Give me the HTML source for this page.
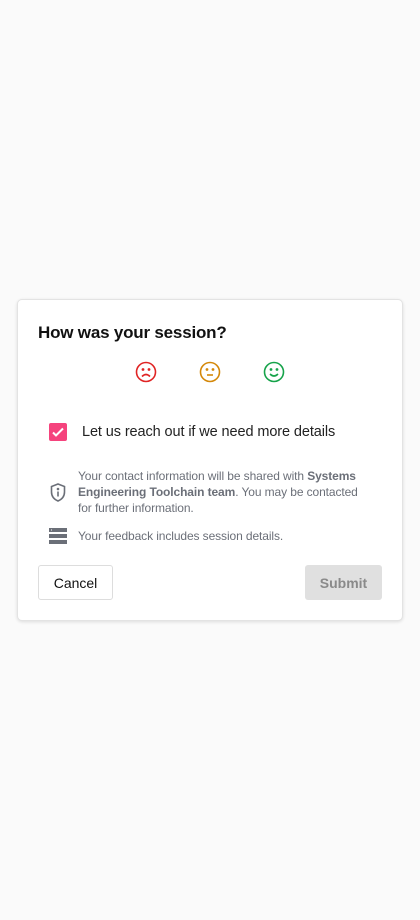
<!DOCTYPE html>
<html><head><style>
body{margin:0;width:420px;height:920px;background:#fafafa;font-family:"Liberation Sans",Roboto,sans-serif;position:relative;overflow:hidden}
.card{position:absolute;left:17px;top:299px;width:384px;height:320px;background:#fff;border:1px solid #e3e3e3;border-radius:5px;box-shadow:0 1px 3px rgba(0,0,0,.12)}
.a{position:absolute}
h1{position:absolute;left:20px;top:23px;margin:0;font-size:17px;letter-spacing:-0.2px;font-weight:bold;color:#111}
.t{font-size:12px;color:#6b6f78;line-height:16px;letter-spacing:-0.1px}
.btn{position:absolute;top:265px;height:35px;border-radius:3px;font-size:14px;display:flex;align-items:center;justify-content:center;box-sizing:border-box}
</style></head><body>
<div class="card">
<h1>How was your session?</h1>
<svg class="a" style="left:117px;top:61px" width="22" height="22" viewBox="0 0 22 22" fill="none" stroke="#e02424" stroke-width="1.6"><circle cx="11" cy="11" r="9.5"/><circle cx="8" cy="8.5" r=".6" fill="#e02424"/><circle cx="14" cy="8.5" r=".6" fill="#e02424"/><path d="M7 15.5q4-4 8 0"/></svg>
<svg class="a" style="left:181px;top:61px" width="22" height="22" viewBox="0 0 22 22" fill="none" stroke="#d4880a" stroke-width="1.6"><circle cx="11" cy="11" r="9.5"/><circle cx="8" cy="8.5" r=".6" fill="#d4880a"/><circle cx="14" cy="8.5" r=".6" fill="#d4880a"/><path d="M8 14h6"/></svg>
<svg class="a" style="left:245px;top:61px" width="22" height="22" viewBox="0 0 22 22" fill="none" stroke="#16a34a" stroke-width="1.6"><circle cx="11" cy="11" r="9.5"/><circle cx="8" cy="8.5" r=".6" fill="#16a34a"/><circle cx="14" cy="8.5" r=".6" fill="#16a34a"/><path d="M7 13q4 4 8 0"/></svg>
<div class="a" style="left:31px;top:123px;width:18px;height:18px;background:#f5437d;border-radius:2px"><svg width="18" height="18" viewBox="0 0 18 18"><path d="M4 9.5l3 3 7-7" stroke="#fff" stroke-width="2" fill="none"/></svg></div>
<div class="a" style="left:64px;top:123px;font-size:14.5px;color:#222;line-height:18px;letter-spacing:-0.1px">Let us reach out if we need more details</div>
<svg class="a" style="left:31px;top:182px" width="18" height="22" viewBox="0 0 18 22" fill="none" stroke="#6b6f78" stroke-width="1.6"><path d="M9 2l6.5 2.5v5.5c0 4.5-3 7.5-6.5 9-3.5-1.5-6.5-4.5-6.5-9V4.5z"/><path d="M9 9.5v5"/><circle cx="9" cy="7" r=".5" fill="#6b6f78"/></svg>
<div class="a t" style="left:60px;top:168px;width:285px">Your contact information will be shared with <b>Systems Engineering Toolchain team</b>. You may be contacted for further information.</div>
<svg class="a" style="left:31px;top:228px" width="18" height="16" viewBox="0 0 18 16" fill="#6b6f78"><rect x="0" y="0" width="18" height="4"/><rect x="0" y="6" width="18" height="4"/><rect x="0" y="12" width="18" height="4"/><rect x="2" y="1.5" width="1" height="1" fill="#fff"/></svg>
<div class="a t" style="left:60px;top:228px">Your feedback includes session details.</div>
<div class="btn" style="left:20px;width:75px;border:1px solid #ddd;color:#111">Cancel</div>
<div class="btn" style="left:287px;width:77px;background:#e0e0e0;color:#8a8a8a;font-weight:bold">Submit</div>
</div>
</body></html>
